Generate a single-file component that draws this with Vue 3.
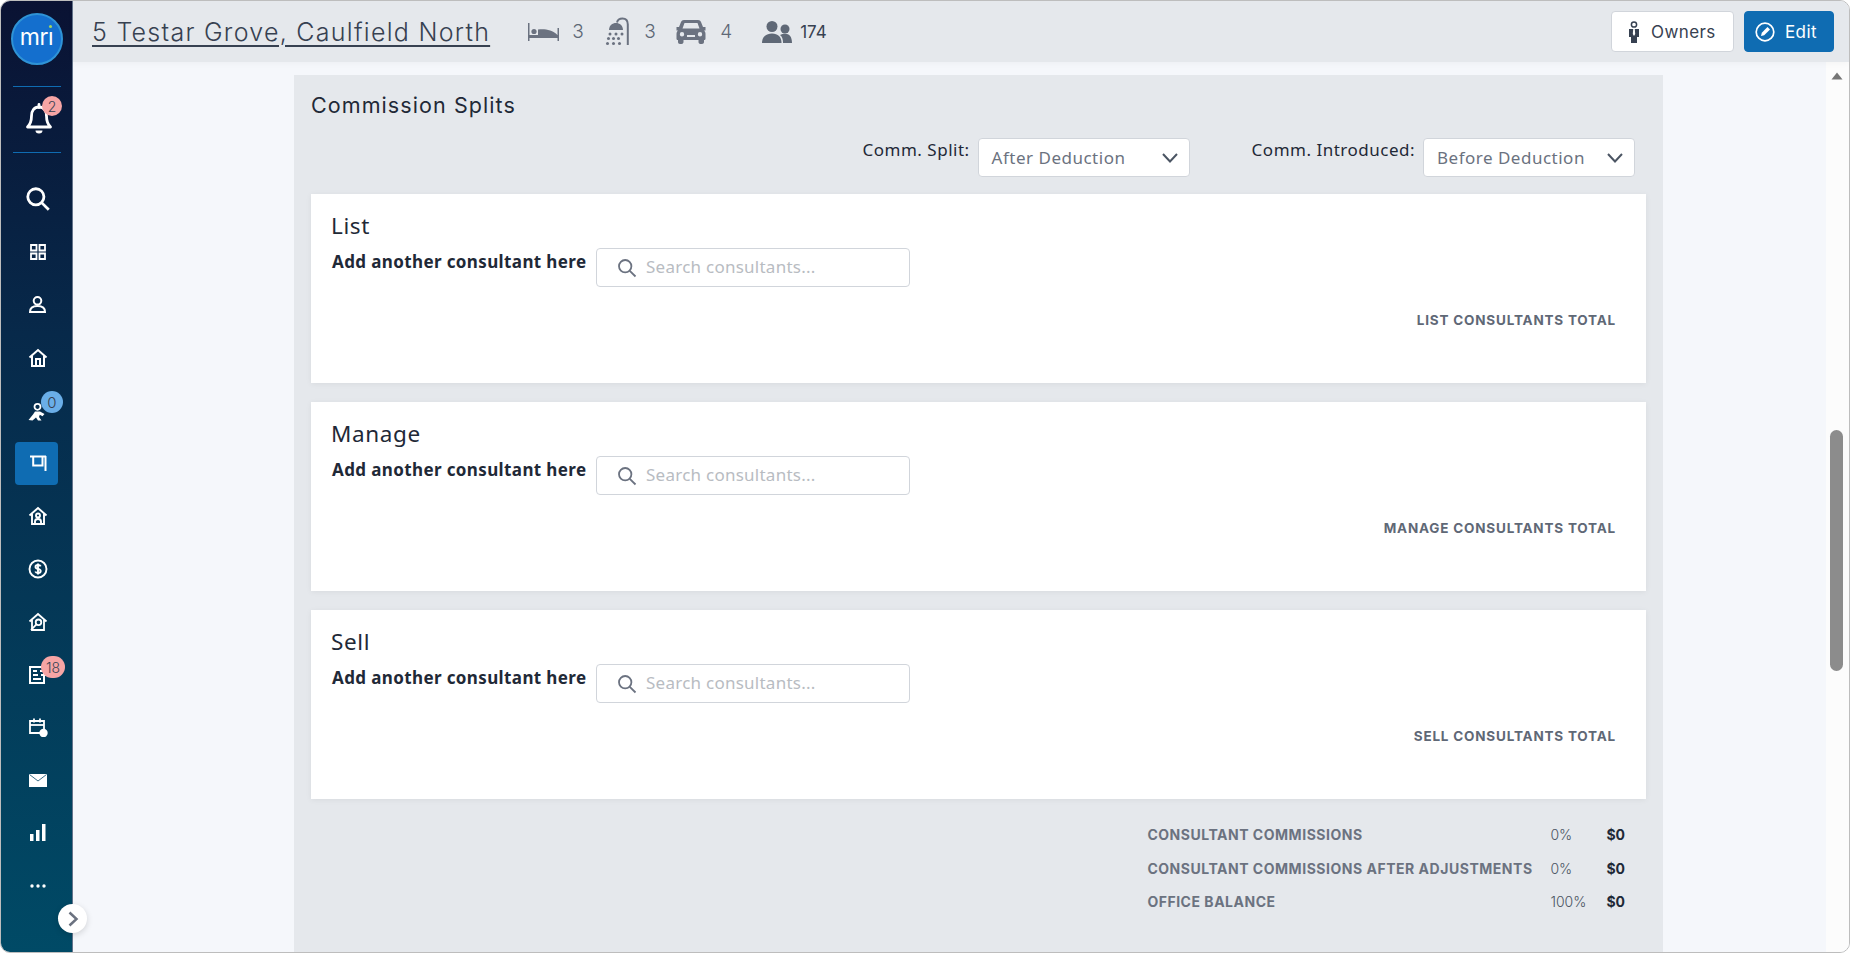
<script setup>
const navItems = [
  { key: 'search', size: 28, view: 26, paths: ['M11 3.5a7.5 7.5 0 1 0 0 15a7.5 7.5 0 1 0 0-15z', 'M16.6 16.6L23 23'], sw: 2.6 },
  { key: 'grid', size: 16, paths: ['M1 1h5.5v5.5H1z', 'M9.5 1H15v5.5H9.5z', 'M1 9.5h5.5V15H1z', 'M9.5 9.5H15V15H9.5z'], sw: 1.8 },
  { key: 'person', size: 19, paths: ['M9.5 2a3.8 3.8 0 1 0 0 7.6a3.8 3.8 0 1 0 0-7.6z', 'M2 17c0-4 3-6 7.5-6s7.5 2 7.5 6z'], sw: 2 },
  { key: 'home', size: 20, paths: ['M1.5 9.5L10 2l8.5 7.5', 'M4 8v10h12V8', 'M8 18v-7h4v7'], sw: 2 },
  { key: 'run', size: 22, fills: ['M8 11.500L13 11.500L17.500 14L15.500 16.200L12.800 14.800L12 17L14.500 20.500L11 20.500L9 17.500L5.500 20.500L1.500 20L6 14.500z'], paths: ['M10.500 3.800a3 3 0 1 0 0 6a3 3 0 1 0 0-6z'], sw: 1.800 },
  { key: 'sign', size: 20, active: true, paths: ['M2 3.500h16', 'M17.500 3V18', 'M5.200 3.500V12.500h9.300V3.500'], sw: 2 },
  { key: 'home2', size: 20, paths: ['M1.5 9.5L10 2l8.5 7.5', 'M4 8v10h12V8', 'M10 7.500a2 2 0 1 0 0 4a2 2 0 1 0 0-4z', 'M7 18v-2.500c0-1.500 1.300-2.500 3-2.500s3 1 3 2.500V18'], sw: 1.9 },
  { key: 'dollar', size: 20, paths: ['M10 1.500a8.500 8.500 0 1 0 0 17a8.500 8.500 0 1 0 0-17z', 'M12.700 7.400C12.200 6.300 11.200 6 10 6C8.500 6 7.500 6.700 7.500 7.900C7.500 10.600 12.700 9.300 12.700 12.100C12.700 13.300 11.500 14 10 14C8.700 14 7.700 13.600 7.300 12.500', 'M10 4.600v10.800'], sw: 1.9 },
  { key: 'home3', size: 20, paths: ['M1.500 9.500L10 2l8.500 7.500', 'M4 8v10h12V8', 'M10.500 7.500a2.800 2.800 0 1 0 0 5.600a2.800 2.800 0 1 0 0-5.600z', 'M8.400 12.400L3 18'], sw: 1.800 },
  { key: 'doc', size: 20, paths: ['M2 2h14v16H2z', 'M5 6h4', 'M5 10h5', 'M5 14h8', 'M12 6h5', 'M13 10h5'], sw: 2 },
  { key: 'cal', size: 20, paths: ['M2 4h14v12H2z', 'M2 8h14', 'M6 1.500v4', 'M12 1.500v4'], sw: 1.8, dot: true },
  { key: 'mail', size: 20, mail: true, paths: [], sw: 0 },
  { key: 'chart', size: 18, chart: true, paths: [], sw: 0 },
  { key: 'more', size: 16, more: true, paths: [], sw: 0 },
]
const badges = { run: { text: '0', cls: 'blue' }, doc: { text: '18', cls: 'pink wide' } }
const groups = ['List', 'Manage', 'Sell']
const totals = [
  { label: 'CONSULTANT COMMISSIONS', pct: '0%' },
  { label: 'CONSULTANT COMMISSIONS AFTER ADJUSTMENTS', pct: '0%' },
  { label: 'OFFICE BALANCE', pct: '100%' },
]
</script>

<template>
  <div class="window">
    <aside class="sidebar">
      <div class="logo"><span class="logo-text">mr<span class="logo-i">ı</span></span></div>
      <div class="bell-block">
        <div class="nav-slot bell-slot">
          <svg width="28" height="32" viewBox="0 0 28 32" fill="none" stroke="#fff" stroke-width="2.800">
            <path d="M14 4c-5 0-7.500 4-7.500 9c0 5-1 8-4 11h23c-3-3-4-6-4-11c0-5-2.500-9-7.500-9z" stroke-linejoin="round" />
            <path d="M14 1.500v3" stroke-linecap="round" />
            <path d="M10.500 27.500h7a3.500 3 0 0 1-7 0z" fill="#fff" stroke="none" />
          </svg>
          <span class="badge pink bell-badge">2</span>
        </div>
      </div>
      <nav class="nav">
        <div v-for="item in navItems" :key="item.key" class="nav-slot" :class="{ active: item.active }">
          <svg v-if="item.mail" width="18" height="13" viewBox="0 0 18 13"><path d="M0 0h18v13H0z" fill="#fff" /><path d="M0.500 0.500L9 7l8.500-6.500" fill="none" stroke="#3a6f88" stroke-width="1" /></svg>
          <svg v-else-if="item.chart" width="16" height="17" viewBox="0 0 16 17" fill="#fff"><path d="M0 10h3.500v7H0z" /><path d="M6 6h3.500v11H6z" /><path d="M12 0h3.500v17H12z" /></svg>
          <svg v-else-if="item.more" width="16" height="4" viewBox="0 0 16 4" fill="#fff"><circle cx="2" cy="2" r="1.700" /><circle cx="8" cy="2" r="1.700" /><circle cx="14" cy="2" r="1.700" /></svg>
          <svg v-else :width="item.size" :height="item.size" :viewBox="`0 0 ${item.view || item.size} ${item.view || item.size}`" fill="none" stroke="#fff" :stroke-width="item.sw">
            <path v-for="d in item.fills" :key="d" :d="d" fill="#fff" stroke="none" />
            <path v-for="d in item.paths" :key="d" :d="d" />
            <circle v-if="item.dot" cx="15.500" cy="16" r="4.200" fill="#fff" stroke="none" />
          </svg>
          <span v-if="badges[item.key]" class="badge" :class="badges[item.key].cls">{{ badges[item.key].text }}</span>
        </div>
      </nav>
      <button class="expand">
        <svg width="12" height="16" viewBox="0 0 12 16" fill="none" stroke="#6b7280" stroke-width="2.500"><path d="M2.500 1.500L9.500 8l-7 6.500" /></svg>
      </button>
    </aside>

    <div class="main">
      <header class="topbar">
        <a class="address">5 Testar Grove, Caulfield North</a>
        <div class="facts">
          <div class="fact bed">
            <svg width="31" height="18" viewBox="0 0 31 18" fill="#6b7280"><path d="M0 0h1.500v18H0z" /><path d="M29.500 5h1.500v13h-1.500z" /><path d="M1 12h29v3H1z" /><circle cx="6" cy="8.500" r="2.600" /><path d="M10 6.500c6-1 14 0 19.500 5.500H10z" /></svg>
            <span>3</span>
          </div>
          <div class="fact shower">
            <svg width="25" height="29" viewBox="0 0 25 29" fill="#6b7280"><path d="M22.800 28V7.500C22.800 3.500 20.500 1.500 17.500 1.500C14.500 1.500 12.500 3 12 5.500" fill="none" stroke="#6b7280" stroke-width="2" /><path d="M4 13C4 8.500 7.500 6 11 6C14.500 6 18 8.500 18 13z" /><circle cx="5" cy="17" r="1.500" /><circle cx="11" cy="17" r="1.500" /><circle cx="17" cy="17" r="1.500" /><circle cx="3.500" cy="21.500" r="1.500" /><circle cx="8.500" cy="21.500" r="1.500" /><circle cx="13.500" cy="21.500" r="1.500" /><circle cx="2.500" cy="26.500" r="1.500" /><circle cx="8.500" cy="26.500" r="1.500" /><circle cx="14.500" cy="26.500" r="1.500" /></svg>
            <span>3</span>
          </div>
          <div class="fact car">
            <svg width="30" height="24" viewBox="0 0 30 24" fill="#6b7280"><path fill-rule="evenodd" d="M8 0h14c1.500 0 2.500.8 3 2l2 5h2.500v3.500H28c1 1 1.500 2 1.500 3.500v4.500c0 1-.6 1.500-1.500 1.500v2c0 1-.8 2-2 2h-1.500c-1.200 0-2-1-2-2v-2h-15v2c0 1-.8 2-2 2H4c-1.200 0-2-1-2-2v-2c-.9 0-1.500-.5-1.500-1.500V14c0-1.500.5-2.500 1.500-3.500H.5V7H3l2-5c.5-1.200 1.500-2 3-2zM8.500 3L6.500 8.500h17L21.500 3zM6 12a2.200 2.200 0 1 0 0 4.400a2.200 2.200 0 1 0 0-4.400zM24 12a2.200 2.200 0 1 0 0 4.400a2.200 2.200 0 1 0 0-4.400zM11 15v2h8v-2z" /></svg>
            <span>4</span>
          </div>
          <div class="fact people">
            <svg width="30" height="22" viewBox="0 0 30 22" fill="#5f6876"><circle cx="10" cy="5.500" r="5.500" /><path d="M0 22c0-6 4-9.500 10-9.500s9.500 3.500 9.500 9.500z" /><circle cx="23" cy="8" r="4.500" /><path d="M21 22c0-4-1-6.500-3-8c1.500-1 3.500-1.300 5-1.300c4.500 0 7 3 7 9.300z" /></svg>
            <span>174</span>
          </div>
        </div>
        <div class="actions">
          <button class="btn owners">
            <svg width="12" height="22" viewBox="0 0 12 22"><circle cx="6" cy="3.500" r="2.600" fill="none" stroke="#374151" stroke-width="1.500" /><path d="M1 8h10v8H9v6H3v-6H1z" fill="#374151" /><path d="M5.200 8h1.600l.4 5L6 15l-1.200-2z" fill="#fff" /></svg>
            <span>Owners</span>
          </button>
          <button class="btn edit">
            <svg width="20" height="20" viewBox="0 0 20 20" fill="none" stroke="#fff" stroke-width="1.700"><circle cx="10" cy="10" r="8.800" /><path d="M6 14l.8-3.200L12.500 5l2.500 2.500-5.800 5.700z" fill="#fff" stroke="none" /></svg>
            <span>Edit</span>
          </button>
        </div>
      </header>

      <div class="body">
        <div class="content">
          <section class="panel">
            <h2 class="panel-title">Commission Splits</h2>
            <div class="filters">
              <label class="filter">
                <span>Comm. Split:</span>
                <div class="select">
                  <span>After Deduction</span>
                  <svg width="16" height="10" viewBox="0 0 16 10" fill="none" stroke="#4b5563" stroke-width="2"><path d="M1 1l7 7.500L15 1" /></svg>
                </div>
              </label>
              <label class="filter">
                <span>Comm. Introduced:</span>
                <div class="select">
                  <span>Before Deduction</span>
                  <svg width="16" height="10" viewBox="0 0 16 10" fill="none" stroke="#4b5563" stroke-width="2"><path d="M1 1l7 7.500L15 1" /></svg>
                </div>
              </label>
            </div>

            <div class="cards">
              <article v-for="group in groups" :key="group" class="card">
                <h3 class="card-title">{{ group }}</h3>
                <div class="add-row">
                  <strong>Add another consultant here</strong>
                  <div class="search">
                    <svg width="20" height="20" viewBox="0 0 20 20" fill="none" stroke="#6b7280" stroke-width="1.800"><circle cx="8.200" cy="8.200" r="6.200" /><path d="M12.800 12.800L18.500 18.500" /></svg>
                    <span class="placeholder">Search consultants...</span>
                  </div>
                </div>
                <div class="card-total">{{ group.toUpperCase() }} CONSULTANTS TOTAL</div>
              </article>
            </div>

            <div class="summary">
              <div v-for="row in totals" :key="row.label" class="summary-row">
                <span class="summary-label">{{ row.label }}</span>
                <span class="summary-pct">{{ row.pct }}</span>
                <strong class="summary-amt">$0</strong>
              </div>
            </div>
          </section>
        </div>
        <div class="scrollbar">
          <svg class="arrow" width="12" height="8" viewBox="0 0 12 8" fill="#757575"><path d="M6 0.500L11.500 7.500H0.500z" /></svg>
          <div class="thumb"></div>
        </div>
      </div>
    </div>
  </div>
</template>

<style>
html, body { margin: 0; padding: 0; overflow: hidden; background: #fff; }
</style>

<style scoped>
.window {
  box-sizing: border-box;
  width: 1850px;
  height: 953px;
  display: flex;
  overflow: hidden;
  border: 1px solid #bdbdbd;
  border-radius: 10px;
  background: #f5f7fb;
  font-family: Inter, "Liberation Sans", sans-serif;
  color: #374151;
}
.sidebar {
  position: relative;
  flex: 0 0 72px;
  box-sizing: border-box;
  width: 72px;
  display: flex;
  flex-direction: column;
  align-items: center;
  padding-top: 12px;
  background: linear-gradient(180deg, #0a1233 0%, #07294a 35%, #004a66 100%);
  border-right: 1px solid #64748b;
}
.logo {
  box-sizing: border-box;
  width: 52px;
  height: 52px;
  border-radius: 50%;
  flex: none;
  background: #146fce;
  border: 2px solid #2f93d6;
  display: flex;
  align-items: center;
  justify-content: center;
}
.logo-text { font: 400 23px/1 Inter, sans-serif; color: #fff; letter-spacing: -.3px; margin-top: -3px; }
.logo-i { position: relative; color: #fff; }
.logo-i::before {
  content: "";
  position: absolute;
  left: 1.500px;
  top: 2px;
  width: 3px;
  height: 3px;
  border-radius: 50%;
  background: #a4d65e;
}
.bell-block {
  box-sizing: border-box;
  width: 48px;
  margin-top: 21px;
  height: 67px;
  border-top: 1px solid #0f6cb2;
  border-bottom: 1px solid #0f6cb2;
  display: flex;
  align-items: center;
  justify-content: center;
}
.nav {
  display: flex;
  flex-direction: column;
  align-items: center;
  margin-top: 20px;
}
.nav-slot {
  position: relative;
  width: 43px;
  height: 52.800px;
  display: flex;
  align-items: center;
  justify-content: center;
}
.bell-slot { padding-left: 4px; box-sizing: border-box; }
.nav-slot.active::before {
  content: "";
  position: absolute;
  left: 0;
  top: 5px;
  width: 43px;
  height: 43px;
  border-radius: 4px;
  background: #0f6cb2;
}
.nav-slot svg { position: relative; }
.nav-slot:not(.bell-slot) svg { left: 1px; }
.badge {
  position: absolute;
  left: 28px;
  top: 3px;
  width: 20px;
  height: 20px;
  border-radius: 50%;
  display: flex;
  align-items: center;
  justify-content: center;
  font-size: 14px;
  font-weight: 300;
  color: #374151;
}
.badge.pink { background: #f6a5a5; }
.bell-badge { left: 27px; top: 3px; }
.badge.blue { background: #6aaee8; top: 7px; width: 22px; height: 22px; left: 26px; font-size: 15px; }
.badge.wide { width: 24px; height: 22px; border-radius: 11px; left: 26px; top: 8px; }
.expand {
  position: absolute;
  left: 57px;
  bottom: 19px;
  width: 29px;
  height: 29px;
  border: none;
  border-radius: 50%;
  background: #fff;
  box-shadow: 0 2px 6px rgba(0, 0, 0, .15);
  padding: 0;
  display: flex;
  align-items: center;
  justify-content: center;
  z-index: 2;
}
.main {
  flex: 1;
  min-width: 0;
  display: flex;
  flex-direction: column;
}
.topbar {
  flex: 0 0 61px;
  display: flex;
  align-items: center;
  background: #e5e8ec;
  padding: 0 15px 0 19px;
  position: relative;
  z-index: 1;
  box-shadow: 0 2px 6px rgba(0, 0, 0, .03);
}
.address {
  font-size: 25px;
  font-weight: 300;
  letter-spacing: 1.270px;
  color: #374151;
  text-decoration: underline;
  text-decoration-thickness: 1.500px;
  text-underline-offset: 4px;
}
.facts {
  display: flex;
  align-items: center;
  margin-left: 38px;
  font-size: 19px;
  font-weight: 300;
  color: #5f6876;
}
.fact { display: flex; align-items: center; }
.bed { gap: 13px; width: 77px; }
.shower { gap: 14px; width: 71px; }
.car { gap: 14px; width: 86px; }
.people { gap: 8px; color: #374151; font-size: 17px; font-weight: 400; }
.actions { margin-left: auto; display: flex; gap: 10px; }
.btn {
  box-sizing: border-box;
  height: 41px;
  border-radius: 4px;
  display: flex;
  align-items: center;
  font-family: inherit;
  font-size: 17px;
  padding: 0;
}
.owners {
  width: 123px;
  background: #fff;
  border: 1px solid #d1d5db;
  color: #374151;
  padding-left: 16px;
  gap: 11px;
  letter-spacing: .4px;
}
.edit {
  width: 90px;
  background: #0f6cb2;
  border: 1px solid #0f6cb2;
  color: #fff;
  padding-left: 10px;
  gap: 10px;
  letter-spacing: .4px;
}
.body {
  flex: 1;
  min-height: 0;
  display: flex;
}
.content {
  flex: 1;
  min-width: 0;
  padding: 13px 163px 0 221px;
  overflow: hidden;
}
.panel {
  height: 100%;
  box-sizing: border-box;
  background: #e5e8ec;
  padding: 0 17px 0 17px;
  display: flex;
  flex-direction: column;
}
.panel-title {
  margin: 16px 0 0;
  font-size: 21.500px;
  line-height: 29px;
  font-weight: 400;
  color: #1f2937;
  letter-spacing: 1.080px;
}
.filters {
  display: flex;
  justify-content: flex-end;
  gap: 62px;
  margin-top: 18px;
  padding-right: 11px;
  font-family: "Noto Sans", sans-serif;
}
.filter {
  display: flex;
  align-items: flex-start;
  gap: 8px;
  font-size: 17px;
  line-height: 24px;
  letter-spacing: .5px;
  color: #1f2937;
}
.select {
  box-sizing: border-box;
  width: 212px;
  height: 39px;
  background: #fff;
  border: 1px solid #d1d5db;
  border-radius: 4px;
  padding: 0 11px 0 13px;
  display: flex;
  align-items: center;
  justify-content: space-between;
  font-size: 17px;
  letter-spacing: .5px;
  color: #6b7280;
}
.cards {
  display: flex;
  flex-direction: column;
  gap: 19.500px;
  margin-top: 17px;
}
.card {
  height: 188.500px;
  box-sizing: border-box;
  background: #fff;
  box-shadow: 0 1px 6px rgba(0, 0, 0, .06);
  padding: 18px 30px 0 20px;
}
.card-title {
  margin: 0;
  font-size: 22.500px;
  line-height: 28px;
  font-weight: 400;
  font-family: "Noto Sans", sans-serif;
  letter-spacing: .6px;
  color: #1f2937;
}
.add-row {
  display: flex;
  align-items: flex-start;
  gap: 9px;
  margin-top: 8px;
  font-family: "Noto Sans", sans-serif;
}
.add-row strong {
  font-size: 17px;
  line-height: 24px;
  padding: 2px 0 0 1px;
  font-weight: 700;
  color: #1f2937;
  letter-spacing: .38px;
  width: 255px;
  white-space: nowrap;
}
.search {
  box-sizing: border-box;
  width: 314px;
  height: 39px;
  border: 1px solid #d1d5db;
  border-radius: 4px;
  display: flex;
  align-items: center;
  padding-left: 20px;
  gap: 9px;
  font-size: 17px;
  letter-spacing: .25px;
  color: #b8bcc2;
}
.placeholder { margin-top: -2px; }
.card-total {
  margin-top: 23px;
  text-align: right;
  font-size: 13.500px;
  line-height: 20px;
  font-weight: 700;
  letter-spacing: .8px;
  color: #5f6876;
}
.summary {
  margin-top: 26px;
  align-self: flex-end;
  display: flex;
  flex-direction: column;
  gap: 13.500px;
  padding-right: 21px;
}
.summary-row {
  display: flex;
  align-items: center;
  height: 20px;
  font-size: 14px;
}
.summary-label {
  width: 403px;
  font-weight: 700;
  letter-spacing: .52px;
  color: #6b7280;
  white-space: nowrap;
}
.summary-pct { width: 56px; font-weight: 300; color: #4b5563; }
.summary-amt { font-weight: 700; color: #1f2937; }
.scrollbar {
  flex: 0 0 23px;
  background: #fcfcfc;
  display: flex;
  flex-direction: column;
  align-items: center;
  padding-top: 10px;
  padding-right: 2px;
  box-sizing: border-box;
}
.arrow { flex: none; }
.thumb {
  width: 13px;
  height: 241px;
  margin-top: 350px;
  border-radius: 7px;
  background: #8c8c8c;
}
</style>
